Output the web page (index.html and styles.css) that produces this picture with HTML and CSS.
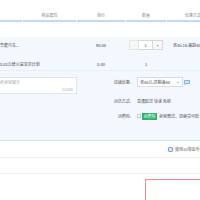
FILE: index.html
```html
<!DOCTYPE html>
<html lang="zh-CN">
<head>
<meta charset="utf-8">
<title>确认订单</title>
<link rel="stylesheet" href="styles.css">
</head>
<body>
<div class="page">
  <div class="thead">
    <div class="th"></div>
    <div class="th">商品属性</div>
    <div class="th">单价</div>
    <div class="th">数量</div>
    <div class="th th-left">优惠方式</div>
  </div>

  <div class="shop">
    <div class="row row-item">
      <div class="cell name">鲁能汽车...</div>
      <div class="cell"></div>
      <div class="cell center">90.00</div>
      <div class="cell center">
        <div class="qty">
          <span class="qbtn minus">−</span>
          <span class="qinput">1</span>
          <span class="qbtn plus">+</span>
        </div>
      </div>
      <div class="cell promo">省40.10:满到40减40</div>
    </div>

    <div class="row row-charity">
      <div class="cell span2">0.02元给公益宝贝计划</div>
      <div class="cell center">0.00</div>
      <div class="cell center">1</div>
      <div class="cell"></div>
    </div>

    <div class="extra">
      <div class="memo">
        <span class="ph">给卖家留言</span>
        <span class="count">0/200</span>
      </div>
      <div class="options">
        <div class="opt opt-first">
          <span class="opt-label">店铺优惠:</span>
          <div class="opt-value">
            <div class="select">
              <span>省40元:送剩满40</span>
              <svg class="chev" width="4" height="3" viewBox="0 0 4 3"><path d="M0.5 0.7 L2 2.2 L3.5 0.7" fill="none" stroke="#999" stroke-width="0.6"/></svg>
            </div>
            <svg class="msg" width="6" height="5" viewBox="0 0 6 5"><path d="M0.5 0.5 H5.5 V3.5 H2 L1 4.6 V3.5 H0.5 Z" fill="#d6e6fd" stroke="#3d8af7" stroke-width="0.6"/></svg>
          </div>
        </div>
        <div class="opt opt-second">
          <span class="opt-label">运送方式:</span>
          <div class="opt-value">普通配送 快递 免邮</div>
        </div>
        <div class="opt">
          <span class="opt-label">运费险:</span>
          <div class="opt-value">
            <span class="check">
              <svg width="4" height="4" viewBox="0 0 4 4"><path d="M0.8 2 L1.7 2.9 L3.3 1" fill="none" stroke="#aaa" stroke-width="0.6"/></svg>
            </span>
            <span class="tag">运费险</span>
            <span class="tag-text">卖家赠送，退换货可赔</span>
          </div>
        </div>
      </div>
    </div>
  </div>

  <div class="coin">
    <span class="coin-box"></span>
    <span class="coin-text">使用10淘金币抵扣0.10元</span>
  </div>
  <div class="blank"></div>
  <div class="total"></div>
</div>
</body>
</html>
```

FILE: styles.css
```css
html, body {
  margin: 0;
  padding: 0;
}

body {
  width: 200px;
  height: 200px;
  overflow: hidden;
  background: #fff;
  font-family: "Noto Sans CJK SC", "Noto Sans", sans-serif;
  font-size: 4px;
  color: #555;
}

.page {
  width: 260px;
}

.thead {
  display: grid;
  grid-template-columns: 22px 53px 48px 40px 94px;
  column-gap: 1px;
  padding-top: 10px;
}

.th {
  height: 10px;
  line-height: 10px;
  text-align: center;
  color: #888;
  border-bottom: 2px solid #c2d8f7;
}

.th-left {
  text-align: left;
  padding-left: 18px;
}

.shop {
  margin-top: 15px;
  height: 103px;
  background: #f3f7fe;
  border-bottom: 1px solid #d8e5f8;
}

.row {
  display: grid;
  grid-template-columns: 22px 53px 48px 40px 94px;
  column-gap: 1px;
}

.row-item {
  height: 16px;
  align-items: center;
}

.row-charity {
  height: 18px;
  box-sizing: border-box;
  align-items: end;
  padding-bottom: 3px;
  border-bottom: 1px solid #e8eef9;
}

.cell {
  line-height: 5px;
  white-space: nowrap;
  color: #444;
}

.center {
  text-align: center;
  display: flex;
  justify-content: center;
}

.span2 {
  grid-column: span 2;
}

.promo {
  padding-left: 6px;
}

.qty {
  display: flex;
  height: 10px;
}

.qbtn, .qinput {
  box-sizing: border-box;
  height: 10px;
  line-height: 8px;
  text-align: center;
  display: inline-block;
}

.qbtn {
  width: 10px;
  border: 1px solid #e4e4e4;
  background: #f7f7f7;
}

.minus {
  color: #ccc;
}

.plus {
  width: 11px;
  color: #555;
  border-color: #d8d8d8;
}

.qinput {
  width: 13px;
  background: #fff;
  border-top: 1px solid #d8d8d8;
  border-bottom: 1px solid #d8d8d8;
  color: #333;
}

.extra {
  display: flex;
  height: 68px;
}

.memo {
  margin-top: 6px;
  width: 77px;
  height: 17px;
  box-sizing: border-box;
  background: #fff;
  border: 1px solid #dfe5ee;
  border-left: none;
  padding: 2px 3px 1px 0;
  display: flex;
  flex-direction: column;
  justify-content: space-between;
  line-height: 5px;
}

.ph {
  color: #aaa;
}

.count {
  align-self: flex-end;
  color: #aaa;
}

.options {
  margin-top: 6px;
  display: flex;
  flex-direction: column;
}

.opt {
  display: flex;
  align-items: center;
  height: 10px;
  line-height: 5px;
}

.opt-first {
  margin-bottom: 9px;
}

.opt-second {
  margin-bottom: 5px;
}

.opt-label {
  width: 54px;
  text-align: right;
  color: #555;
}

.opt-value {
  margin-left: 6px;
  display: flex;
  align-items: center;
  white-space: nowrap;
  color: #555;
}

.select {
  width: 46px;
  height: 10px;
  box-sizing: border-box;
  border: 1px solid #d6dce6;
  background: #fff;
  padding: 0 2px;
  display: flex;
  align-items: center;
  justify-content: space-between;
  color: #444;
}

.chev {
  display: block;
}

.msg {
  display: block;
  margin-left: 1px;
}

.check {
  width: 4px;
  height: 4px;
  box-sizing: border-box;
  border: 0.5px solid #ccc;
  background: #fff;
  display: flex;
}

.check svg {
  display: block;
}

.tag {
  margin-left: 1px;
  height: 7px;
  line-height: 7px;
  padding: 0 1.5px;
  background: #2eb36d;
  color: #fff;
}

.tag-text {
  margin-left: 2px;
}

.coin {
  height: 17px;
  box-sizing: border-box;
  border-bottom: 1px solid #eeeeee;
  display: flex;
  align-items: center;
  padding-left: 168px;
  line-height: 5px;
}

.coin-box {
  width: 5px;
  height: 5px;
  box-sizing: border-box;
  border: 1px solid #7aa6f0;
  background: #dce8fd;
  border-radius: 1px;
}

.coin-text {
  margin-left: 2px;
  white-space: nowrap;
  color: #555;
}

.blank {
  height: 16px;
  box-sizing: border-box;
  border-bottom: 1px solid #f0f0f0;
}

.total {
  margin-top: 5px;
  margin-left: 145px;
  width: 100px;
  height: 40px;
  border: 1px solid #f28c9c;
}
```
